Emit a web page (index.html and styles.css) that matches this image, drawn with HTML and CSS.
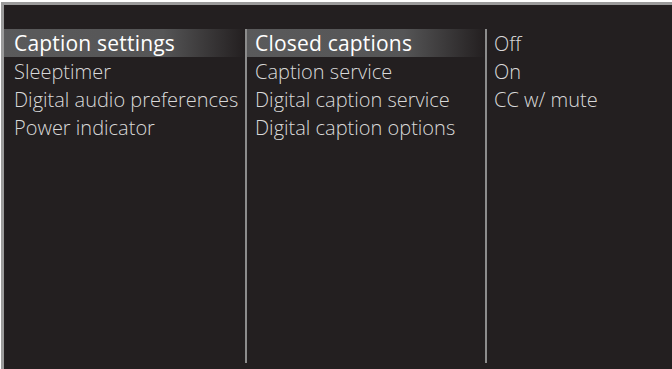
FILE: index.html
```html
<!doctype html>
<html lang="en">
<head>
    <meta charset="UTF-8">
    <title>Caption settings</title>
    <link rel="stylesheet" href="styles.css">
</head>
<body>

<div id="screen">
    <ul class="menu menu-main">
        <li class="active">Caption settings</li>
        <li>Sleeptimer</li>
        <li>Digital audio preferences</li>
        <li>Power indicator</li>
    </ul>
    <ul class="menu menu-sub">
        <li class="active">Closed captions</li>
        <li>Caption service</li>
        <li>Digital caption service</li>
        <li>Digital caption options</li>
    </ul>
    <ul class="menu menu-opt">
        <li>Off</li>
        <li>On</li>
        <li>CC w/ mute</li>
    </ul>
</div>

</body>
</html>
```

FILE: styles.css
```css
*{
    margin: 0;
    padding: 0;
}
ul{
    list-style: none;
}
body,html{
    width: 100%;
    height: 100%;
    overflow: hidden;
    background-color: #fff;
}
#screen{
    margin: 2px 0 0 1px;
    height: 367px;
    box-sizing: border-box;
    border-top: 3px solid #9b9b9b;
    border-left: 3px solid #9b9b9b;
    background-color: #231f20;
    padding-top: 24px;
    display: flex;
    align-items: flex-start;
    font-family: "Open Sans", "Liberation Sans", sans-serif;
    font-size: 20px;
    font-weight: 300;
    color: #d9d9d9;
}
.menu{
    height: 334px;
    box-sizing: border-box;
}
.menu li{
    height: 28px;
    line-height: 29px;
    white-space: nowrap;
}
.menu li.active{
    color: #fff;
    font-size: 21px;
    font-weight: 500;
    letter-spacing: 0.2px;
    background: linear-gradient(to right, #5a5a5b 0%, #555556 66%, #231f20 100%);
}
.menu-main{
    width: 241px;
}
.menu-main li{
    padding-left: 10px;
}
.menu-sub{
    width: 240px;
    border-left: 2px solid #8c8c8c;
}
.menu-sub li{
    padding-left: 8px;
}
.menu-opt{
    flex: 1;
    border-left: 2px solid #8c8c8c;
}
.menu-opt li{
    padding-left: 7px;
}
```
